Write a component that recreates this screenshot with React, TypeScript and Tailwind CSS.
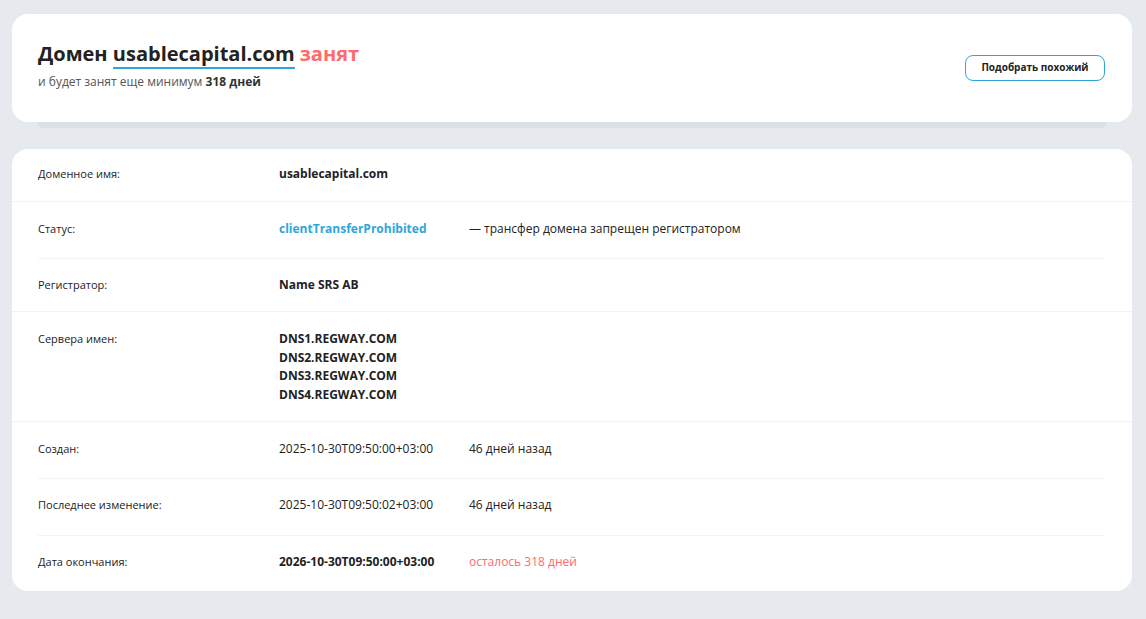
const rowLabel = 'w-[241px] shrink-0 text-[11px] leading-[16px] text-[#222]';

function Row({ label, children, pad, inner }: { label: string; children: React.ReactNode; pad: string; inner?: boolean }) {
  return (
    <div className={(inner ? 'ml-[26px] mr-[27px] flex border-t border-[#f1f3f5] ' : 'flex px-[26px] ') + pad}>
      <div className={rowLabel}>{label}</div>
      <div className="flex text-[12px] leading-[16px] text-[#222]">{children}</div>
    </div>
  );
}

export default function App() {
  return (
    <div className="min-h-[619px] bg-[#e6eaee] pl-[12px] pr-[14px] pt-[14px] font-['Open_Sans',sans-serif]">
      {/* Header card */}
      <div>
        <div className="flex h-[108px] items-center justify-between rounded-[16px] bg-white pl-[26px] pr-[27px] pb-[6px]">
          <div>
            <h1 className="text-[20px] font-bold leading-[28px] text-[#222]">
              Домен{' '}
              <span className="border-b-2 border-[#2ea6d9]">usablecapital.com</span>{' '}
              <span className="text-[#ff6b6b]">занят</span>
            </h1>
            <p className="mt-[6px] text-[12px] leading-[16px] text-[#555]">
              и будет занят еще минимум <b className="text-[#333]">318 дней</b>
            </p>
          </div>
          <button className="mt-[5px] h-[26px] w-[140px] rounded-[8px] border border-[#2ea6d9] text-[10px] font-bold text-[#222]">
            Подобрать похожий
          </button>
        </div>
        <div className="mx-[25px] h-[6px] rounded-b-[8px] bg-[#dce1e6]" />
      </div>

      {/* Details card */}
      <div className="mt-[21px] rounded-[16px] bg-white">
        <Row label="Доменное имя:" pad="pt-[17px] pb-[19px]">
          <span className="font-bold">usablecapital.com</span>
        </Row>

        <div className="border-t border-[#f1f3f5]">
          <Row label="Статус:" pad="pt-[19px] pb-[21px]">
            <span className="w-[190px] font-bold text-[#2ea6d9]">clientTransferProhibited</span>
            <span>— трансфер домена запрещен регистратором</span>
          </Row>
          <Row label="Регистратор:" pad="pt-[18px] pb-[18px]" inner>
            <span className="font-bold">Name SRS AB</span>
          </Row>
        </div>

        <div className="border-t border-[#f1f3f5]">
          <div className="flex px-[26px] pt-[18px] pb-[16px]">
            <div className={rowLabel + ' mt-[1px]'}>Сервера имен:</div>
            <div className="flex flex-col text-[12px] font-bold leading-[18.7px] text-[#222]">
              <span>DNS1.REGWAY.COM</span>
              <span>DNS2.REGWAY.COM</span>
              <span>DNS3.REGWAY.COM</span>
              <span>DNS4.REGWAY.COM</span>
            </div>
          </div>
        </div>

        <div className="border-t border-[#f1f3f5]">
          <Row label="Создан:" pad="pt-[19px] pb-[21px]">
            <span className="w-[190px]">2025-10-30T09:50:00+03:00</span>
            <span>46 дней назад</span>
          </Row>
          <Row label="Последнее изменение:" pad="pt-[18px] pb-[22px]" inner>
            <span className="w-[190px]">2025-10-30T09:50:02+03:00</span>
            <span>46 дней назад</span>
          </Row>
          <Row label="Дата окончания:" pad="pt-[18px] pb-[21px]" inner>
            <span className="w-[190px] font-bold">2026-10-30T09:50:00+03:00</span>
            <span className="text-[#ff6b6b]">осталось 318 дней</span>
          </Row>
        </div>
      </div>
    </div>
  );
}
